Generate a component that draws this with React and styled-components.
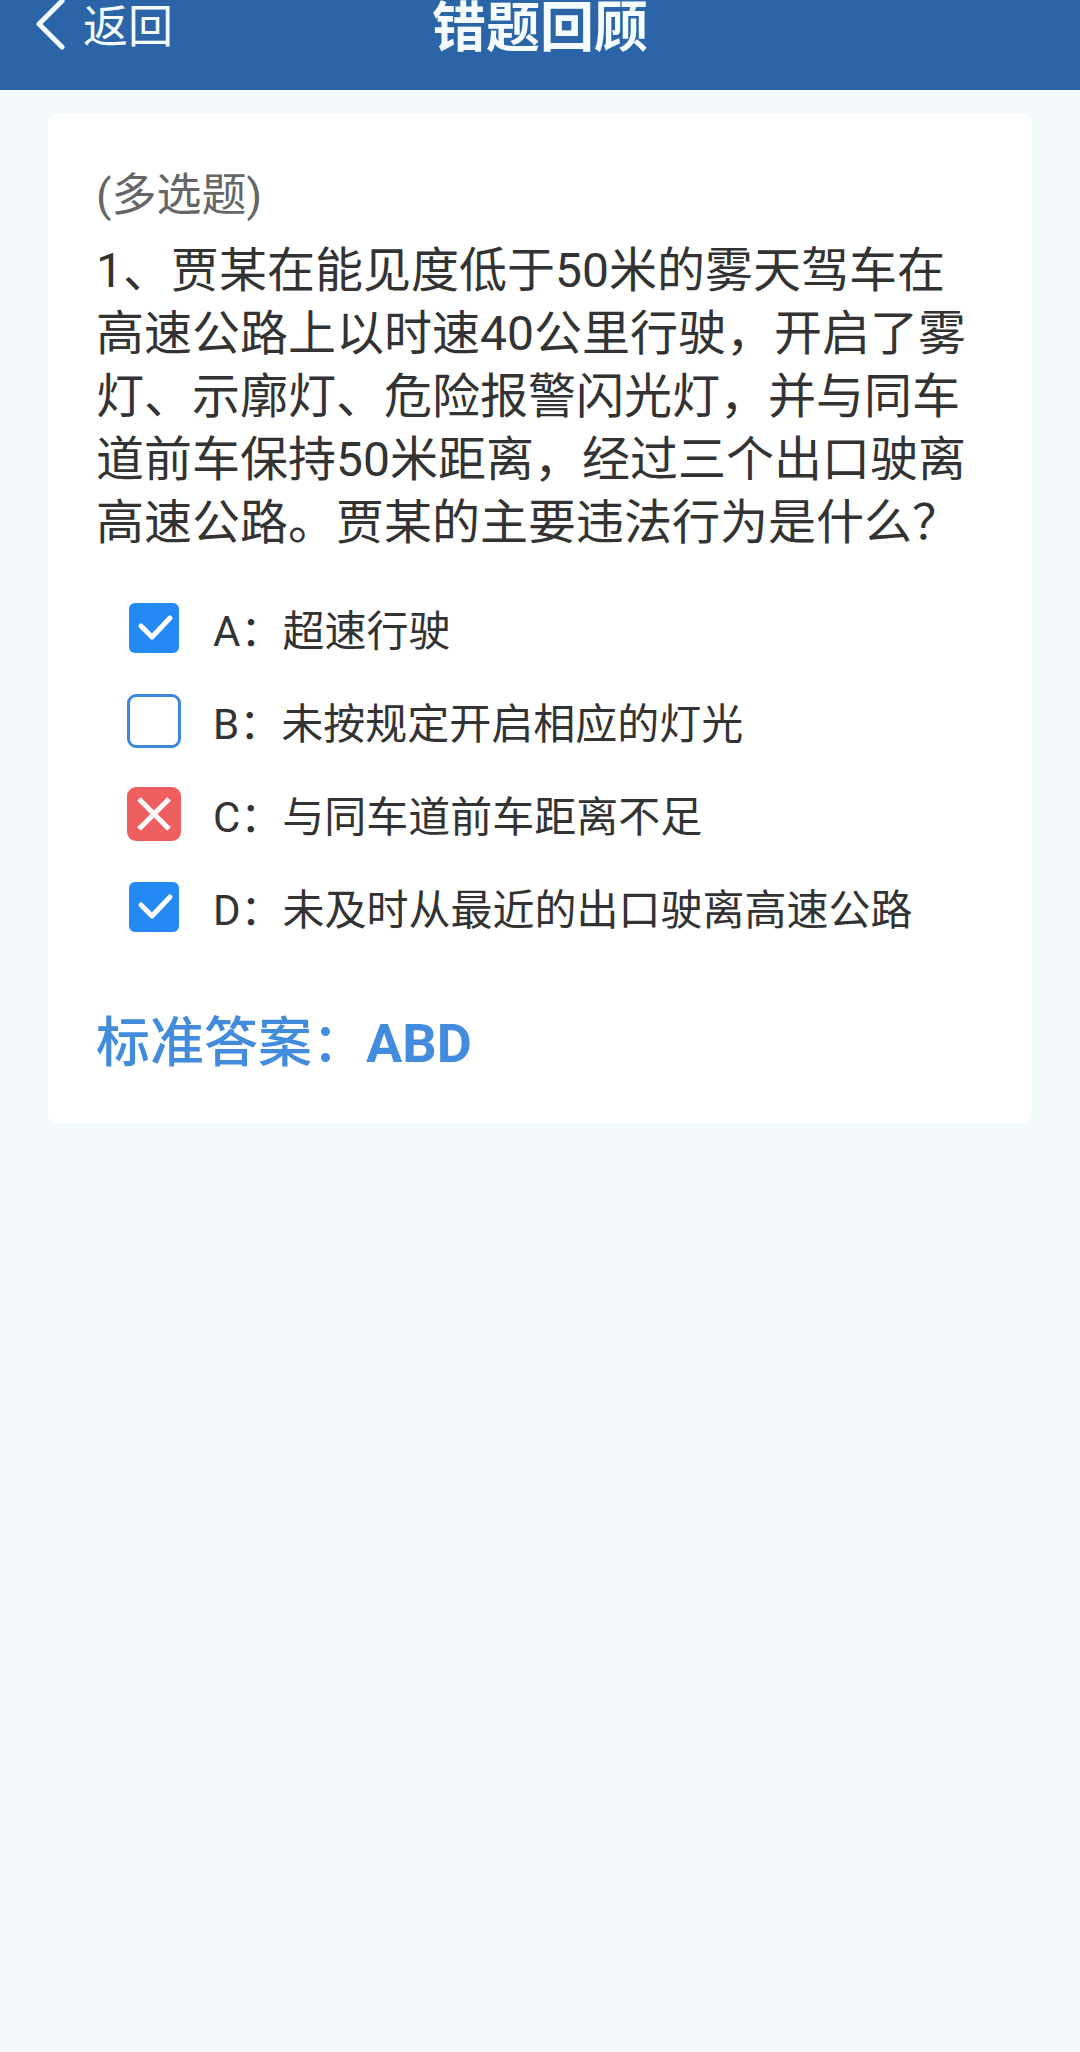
import React from "react";
import styled, { createGlobalStyle } from "styled-components";

const GlobalStyle = createGlobalStyle`
  * {
    box-sizing: border-box;
  }

  body {
    margin: 0;
    background: #f4fafb;
    color: #333;
    font-family: Roboto, "Noto Sans CJK SC", sans-serif;
  }
`;

const Header = styled.header`
  display: grid;
  grid-template-columns: 1fr auto 1fr;
  align-items: start;
  padding: 0 36px 32px;
  background: #2b65a8;
  color: #f5fcff;
`;

const BackButton = styled.button`
  display: flex;
  align-items: center;
  justify-self: start;
  gap: 18px;
  padding: 0;
  border: 0;
  background: none;
  color: inherit;
  font-family: inherit;
  font-size: 45px;
  line-height: 56px;
  cursor: pointer;
`;

const BackIcon = styled.svg`
  width: 29px;
  height: 56px;
  fill: none;
  stroke: currentColor;
  stroke-width: 5;
  stroke-linecap: round;
  stroke-linejoin: round;
`;

const Title = styled.h1`
  margin: 0;
  font-size: 54px;
  font-weight: 700;
  line-height: 58px;
`;

const Card = styled.main`
  margin: 24px 48px;
  padding: 50px 48px 48px;
  border-radius: 9px;
  background: #fff;
`;

const QuestionType = styled.p`
  margin: 0 0 12px;
  color: #666;
  font-size: 45px;
  line-height: 63px;
`;

const Question = styled.h2`
  margin: 0;
  font-size: 48px;
  font-weight: 400;
  line-height: 63px;
`;

const OptionList = styled.ul`
  margin: 27px 0 59px;
  padding: 0 0 0 31px;
  list-style: none;
`;

const Option = styled.label`
  display: flex;
  align-items: center;
  gap: 32px;
  min-height: 93px;
  font-size: 42px;
  line-height: 63px;
`;

const OptionText = styled.span`
  padding-top: 8px;
`;

const CheckSlot = styled.span`
  display: grid;
  flex: none;
  place-items: center;
  width: 54px;
  height: 54px;

  > * {
    grid-area: 1 / 1;
  }
`;

const Checkbox = styled.input`
  appearance: none;
  width: 54px;
  height: 54px;
  margin: 0;
  border: 3px solid #3f87da;
  border-radius: 9px;

  &:checked {
    width: ${(props) => (props.$wrong ? "54px" : "50px")};
    height: ${(props) => (props.$wrong ? "54px" : "50px")};
    border: 0;
    border-radius: ${(props) => (props.$wrong ? "9px" : "6px")};
    background: ${(props) => (props.$wrong ? "#f05f60" : "#2489f5")};
  }

  &:not(:checked) + svg {
    visibility: hidden;
  }
`;

const Mark = styled.svg`
  width: 54px;
  height: 54px;
  fill: none;
  stroke: #fff;
  stroke-width: 5;
  stroke-linecap: ${(props) => (props.$wrong ? "butt" : "round")};
  stroke-linejoin: round;
  pointer-events: none;
`;

const Answer = styled.p`
  margin: 0;
  color: #438bdd;
  font-size: 54px;
  font-weight: 500;
  line-height: 63px;

  strong {
    font-weight: 700;
  }
`;

const options = [
  { key: "A", text: "超速行驶", checked: true },
  { key: "B", text: "未按规定开启相应的灯光", checked: false },
  { key: "C", text: "与同车道前车距离不足", checked: true, wrong: true },
  { key: "D", text: "未及时从最近的出口驶离高速公路", checked: true },
];

function App() {
  return (
    <>
      <GlobalStyle />
      <Header>
        <BackButton type="button">
          <BackIcon viewBox="0 0 29 56" aria-hidden="true">
            <path d="M26 1 L3 24 L26 47" />
          </BackIcon>
          返回
        </BackButton>
        <Title>错题回顾</Title>
      </Header>
      <Card>
        <QuestionType>(多选题)</QuestionType>
        <Question>
          1、贾某在能见度低于50米的雾天驾车在高速公路上以时速40公里行驶，开启了雾灯、示廓灯、危险报警闪光灯，并与同车道前车保持50米距离，经过三个出口驶离高速公路。贾某的主要违法行为是什么？
        </Question>
        <OptionList>
          {options.map(({ key, text, checked, wrong }) => (
            <li key={key}>
              <Option>
                <CheckSlot>
                  <Checkbox type="checkbox" defaultChecked={checked} $wrong={wrong} />
                  <Mark viewBox="0 0 54 54" $wrong={wrong} aria-hidden="true">
                    <path d={wrong ? "M12 12 L42 42 M42 12 L12 42" : "M14 25 L25 36 L43 17"} />
                  </Mark>
                </CheckSlot>
                <OptionText>
                  {key}：{text}
                </OptionText>
              </Option>
            </li>
          ))}
        </OptionList>
        <Answer>
          标准答案：<strong>ABD</strong>
        </Answer>
      </Card>
    </>
  );
}

export default App;
